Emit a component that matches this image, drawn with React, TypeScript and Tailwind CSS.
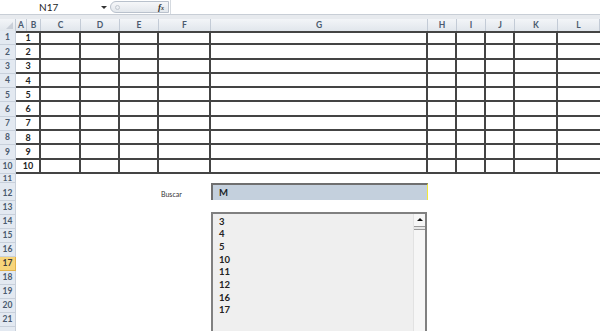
import React from "react";

const COLS = ["A", "B", "C", "D", "E", "F", "G", "H", "I", "J", "K", "L"];
const LIST_ITEMS = ["3", "4", "5", "10", "11", "12", "16", "17"];
const BLANK_ROWS = [13, 14, 15, 16, 17, 18, 19, 20, 21, 22];

const GRID =
  "grid grid-cols-[11px_14px_40px_39px_39px_52px_217px_29px_29px_29px_43px_1fr]";

const App: React.FC = () => {
  return (
    <div className="relative w-[600px] h-[331px] overflow-hidden bg-white font-['Lato','Open_Sans',sans-serif] text-[#222]">
      {/* Formula bar */}
      <div className="flex h-[15px] items-stretch bg-white border-b border-[#c8ced6]">
        <div className="flex w-[110px] items-center">
          <span className="pl-[39px] text-[10px] leading-none text-[#1e1e1e]">
            N17
          </span>
          <span className="ml-auto mr-[3px] w-0 h-0 border-l-[3px] border-r-[3px] border-t-[3px] border-l-transparent border-r-transparent border-t-[#333]" />
        </div>
        <div className="flex w-[59px] items-center rounded-l-full border border-[#b9c1cc] bg-gradient-to-b from-[#f6f7f9] to-[#e3e7ec] my-[1px]">
          <span className="ml-[4px] w-[5px] h-[5px] rounded-full border border-[#c2c8d0]" />
          <span className="ml-auto mr-[4px] text-[9px] font-bold italic leading-none text-[#333] font-['Liberation_Serif',serif]">
            f<span className="text-[6px]">x</span>
          </span>
        </div>
        <div className="flex-1 ml-[1px] border-l border-[#d5dae0] bg-white" />
      </div>
      <div className="h-[4px] bg-[#e7eaee]" />

      {/* Column headers */}
      <div className="flex h-[12px]">
        <div className="relative w-[16px] border-r border-[#c3cbd6] bg-gradient-to-b from-[#f3f5f8] to-[#e1e6ec]">
          <svg className="absolute right-[2px] bottom-[2px]" width="7" height="7">
            <polygon points="7,0 7,7 0,7" fill="#c9cfd8" />
          </svg>
        </div>
        <div className={`flex-1 ${GRID}`}>
          {COLS.map((c) => (
            <div
              key={c}
              className="flex items-center justify-center border-r border-[#c3cbd6] bg-gradient-to-b from-[#f3f5f8] to-[#e1e6ec] text-[8.5px] font-bold leading-none text-[#4a5a6e]"
            >
              {c}
            </div>
          ))}
        </div>
      </div>

      {/* Sheet body */}
      <div className="flex">
        {/* Row headers */}
        <div className="w-[16px] flex flex-col bg-[#e3e9f1] text-[8.5px] font-bold leading-none text-[#4a5a6e]">
          {Array.from({ length: 10 }, (_, i) => (
            <div
              key={i}
              className="h-[14.3px] flex items-center justify-center border-b border-r border-[#c8d0db]"
            >
              {i + 1}
            </div>
          ))}
          <div className="h-[9px] flex items-center justify-center border-b border-r border-[#c8d0db] text-[8px]">
            11
          </div>
          <div className="h-[18px] flex items-center justify-center pt-[3px] border-b border-r border-[#c8d0db]">
            12
          </div>
          {BLANK_ROWS.map((n) => (
            <div
              key={n}
              className={`h-[14px] flex items-center justify-center border-b border-r ${
                n === 17
                  ? "bg-[#f7d47a] border-[#e3b34a] text-[#3b3b3b]"
                  : "border-[#c8d0db]"
              }`}
            >
              {n < 22 ? n : null}
            </div>
          ))}
        </div>

        {/* Cells */}
        <div className="flex-1 flex flex-col">
          <div className="shadow-[inset_0_2px_0_#444]">
            {Array.from({ length: 10 }, (_, i) => (
              <div
                key={i}
                className={`h-[14.3px] border-b-2 border-[#444] ${GRID}`}
              >
                <div className="col-span-2 flex items-center justify-center pl-[1px] border-r-2 border-[#444] text-[9px] font-bold leading-none text-[#222]">
                  {i + 1}
                </div>
                <div className="border-r-2 border-[#444]" />
                <div className="border-r-2 border-[#444]" />
                <div className="border-r-2 border-[#444]" />
                <div className="border-r-2 border-[#444]" />
                <div className="border-r-2 border-[#444]" />
                <div className="border-r-2 border-[#444]" />
                <div className="border-r-2 border-[#444]" />
                <div className="border-r-2 border-[#444]" />
                <div className="border-r-2 border-[#444]" />
                <div />
              </div>
            ))}
          </div>
          <div className="h-[9px]" />
          <div className={`h-[18px] ${GRID}`}>
            <div className="col-span-5" />
            <div className="flex items-end pb-[3px] pl-[2px] text-[7px] leading-none text-[#333]">
              Buscar
            </div>
          </div>
        </div>
      </div>

      {/* Search text box (form control) */}
      <div className="absolute left-[211px] top-[183px] w-[217px] h-[17px] flex items-center bg-[#c4d0dd] border-t-2 border-l-2 border-[#6f6f6f] border-r border-r-[#f2e83a] pl-[6px]">
        <span className="text-[9.5px] font-bold leading-none text-[#1b1f2a]">
          M
        </span>
      </div>

      {/* Result list box (form control) */}
      <div className="absolute left-[211px] top-[212px] w-[216px] h-[130px] flex bg-[#efefef] border-t-2 border-l-2 border-r-2 border-[#808080]">
        <div className="flex-1 flex flex-col pl-[6px] pt-[1px]">
          {LIST_ITEMS.map((item) => (
            <div
              key={item}
              className="h-[12.7px] flex items-center text-[9.5px] font-bold leading-none text-[#222]"
            >
              {item}
            </div>
          ))}
        </div>
        <div className="w-[12px] flex flex-col bg-[#f6f6f6] border-l border-[#e2e2e2]">
          <div className="h-[11px] flex items-center justify-center">
            <span className="w-0 h-0 border-l-[3px] border-r-[3px] border-b-[3px] border-l-transparent border-r-transparent border-b-[#111]" />
          </div>
          <div className="h-[4px] mt-[1px] border-t border-b border-[#9a9a9a] bg-[#e6e6e6]" />
        </div>
      </div>
    </div>
  );
};

export default App;
